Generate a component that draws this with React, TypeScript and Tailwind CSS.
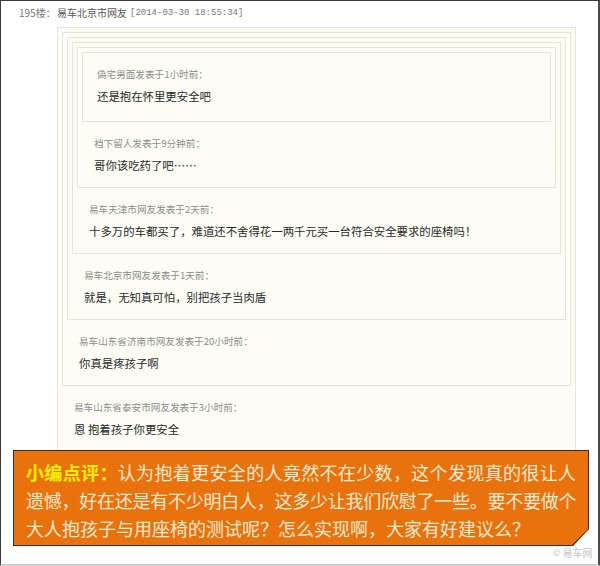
import React from 'react';

interface Reply {
  who: string;
  text: string;
}

// innermost first
const replies: Reply[] = [
  { who: '偽宅男面发表于1小时前：', text: '还是抱在怀里更安全吧' },
  { who: '裆下留人发表于9分钟前：', text: '哥你该吃药了吧……' },
  { who: '易车天津市网友发表于2天前：', text: '十多万的车都买了，难道还不舍得花一两千元买一台符合安全要求的座椅吗！' },
  { who: '易车北京市网友发表于1天前：', text: '就是，无知真可怕，别把孩子当肉盾' },
  { who: '易车山东省济南市网友发表于20小时前：', text: '你真是疼孩子啊' },
  { who: '易车山东省泰安市网友发表于3小时前：', text: '恩 抱着孩子你更安全' },
];

function Quote({ level }: { level: number }) {
  const r = replies[level];
  const nested = level > 0;
  return (
    <div className={`border border-[#e7e5d9] bg-[#fdfdf5] px-[4px] ${nested ? 'pt-[4px]' : ''}`}>
      {nested && <Quote level={level - 1} />}
      <div className={`${nested ? 'pt-[14px] pl-[12px] pb-[13px]' : 'pt-[14px] pl-[10px] pb-[16px]'}`}>
        <div className="text-[9.6px] leading-[14px] text-[#8c8c8c] whitespace-nowrap">{r.who}</div>
        <div className="mt-[6px] text-[11.4px] leading-[18px] text-[#2a2a2a] whitespace-nowrap">{r.text}</div>
      </div>
    </div>
  );
}

export default function App() {
  return (
    <div className="relative w-[600px] h-[566px] overflow-hidden bg-white border-t border-l border-r-2 border-b-2 border-t-[#3c3c3c] border-l-[#3c3c3c] border-r-[#4a4a4a] border-b-[#cfcfcf] font-['Noto_Sans_CJK_SC','Noto_Sans',sans-serif]">
      {/* floor header */}
      <div className="flex items-center pt-[5px] pl-[18px] h-[19px] leading-[14px] text-[10px] text-[#777] whitespace-nowrap">
        <span className="w-[38px]">195楼：</span>
        <span className="text-[#555]">易车北京市网友</span>
        <span className="ml-[3px] font-['Liberation_Mono',monospace] text-[9px] text-[#777]">[2014-03-30 18:55:34]</span>
      </div>

      <div className="mt-[7px] ml-[56px] w-[519px]">
        <Quote level={replies.length - 1} />
      </div>

      {/* editor comment */}
      <div className="absolute left-[12px] top-[449px] w-[576px] h-[96px] bg-[#3f2a18] [clip-path:polygon(0_0,100%_0,100%_calc(100%-17px),calc(100%-16px)_100%,0_100%)]">
        <div className="m-[1px] h-[94px] bg-[#ea720d] pt-[7px] pl-[12px] pr-[12px] text-[18px] leading-[28px] text-[#fdebd2] [clip-path:polygon(0_0,100%_0,100%_calc(100%-16px),calc(100%-16px)_100%,0_100%)]">
          <div className="text-justify [text-align-last:justify] whitespace-nowrap">
            <span className="font-bold text-[#fff200]">小编点评：</span>认为抱着更安全的人竟然不在少数，这个发现真的很让人
          </div>
          <div className="text-justify [text-align-last:justify] whitespace-nowrap tracking-[-0.4px]">
            遗憾，好在还是有不少明白人，这多少让我们欣慰了一些。要不要做个
          </div>
          <div className="whitespace-nowrap">大人抱孩子与用座椅的测试呢？怎么实现啊，大家有好建议么？</div>
        </div>
      </div>

      {/* watermark */}
      <div className="absolute left-[552px] top-[546px] flex items-center gap-[2px] text-[10px] leading-[12px] text-[#c4c4c4] whitespace-nowrap">
        <span className="text-[9px]">©</span>
        <span>易车网</span>
      </div>
    </div>
  );
}
